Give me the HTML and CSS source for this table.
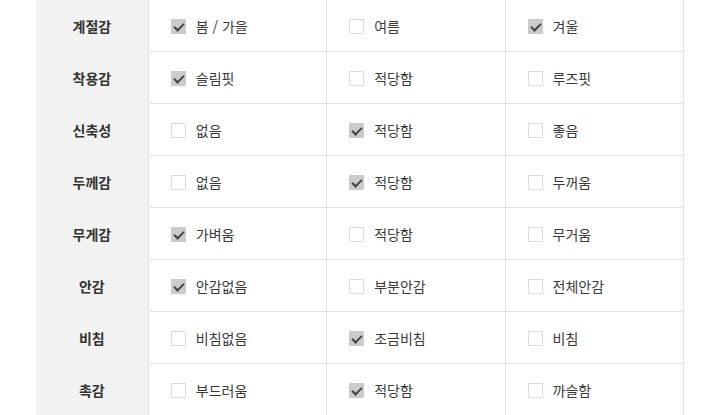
FILE: index.html
```html
<!DOCTYPE html>
<html lang="ko">
<head>
<meta charset="utf-8">
<link rel="stylesheet" href="styles.css">
</head>
<body>
<table class="spec">
  <colgroup><col class="c-label"><col class="c-opt"><col class="c-opt"><col class="c-opt"></colgroup>
  <tbody>
    <tr><th>계절감</th><td><span class="cb on"></span>봄 / 가을</td><td><span class="cb"></span>여름</td><td><span class="cb on"></span>겨울</td></tr>
    <tr><th>착용감</th><td><span class="cb on"></span>슬림핏</td><td><span class="cb"></span>적당함</td><td><span class="cb"></span>루즈핏</td></tr>
    <tr><th>신축성</th><td><span class="cb"></span>없음</td><td><span class="cb on"></span>적당함</td><td><span class="cb"></span>좋음</td></tr>
    <tr><th>두께감</th><td><span class="cb"></span>없음</td><td><span class="cb on"></span>적당함</td><td><span class="cb"></span>두꺼움</td></tr>
    <tr><th>무게감</th><td><span class="cb on"></span>가벼움</td><td><span class="cb"></span>적당함</td><td><span class="cb"></span>무거움</td></tr>
    <tr><th>안감</th><td><span class="cb on"></span>안감없음</td><td><span class="cb"></span>부분안감</td><td><span class="cb"></span>전체안감</td></tr>
    <tr><th>비침</th><td><span class="cb"></span>비침없음</td><td><span class="cb on"></span>조금비침</td><td><span class="cb"></span>비침</td></tr>
    <tr><th>촉감</th><td><span class="cb"></span>부드러움</td><td><span class="cb on"></span>적당함</td><td><span class="cb"></span>까슬함</td></tr>
  </tbody>
</table>
</body>
</html>
```
FILE: styles.css
```css
html, body {
  margin: 0;
  padding: 0;
  background: #fff;
}
body {
  font-family: "Noto Sans CJK KR", "Noto Sans", sans-serif;
  color: #333;
}
.spec {
  margin-top: -1px;
  margin-left: 36px;
  border-collapse: collapse;
  table-layout: fixed;
  width: 648px;
}
.c-label { width: 112px; }
.c-opt { width: 178px; }
.spec th {
  background: #f2f2f2;
  font-size: 14px;
  font-weight: 700;
  color: #333;
  height: 51px;
  padding: 0;
  text-align: center;
  border: none;
  border-top: 1px solid #f2f2f2;
  border-bottom: 1px solid #f2f2f2;
}
.spec td {
  height: 51px;
  padding: 0 0 0 22px;
  font-size: 14px;
  color: #3a3a3a;
  border: 1px solid #e0e0e0;
  white-space: nowrap;
  vertical-align: middle;
}
.cb {
  display: inline-block;
  box-sizing: border-box;
  width: 15px;
  height: 15px;
  border: 1px solid #dcdcdc;
  background: #fff;
  margin-right: 10px;
  vertical-align: -2px;
  position: relative;
}
.cb.on {
  background: #cbcbcb;
  border-color: #cbcbcb;
}
.cb.on::after {
  content: "";
  position: absolute;
  left: 2px;
  top: 3px;
  width: 8px;
  height: 4px;
  border-left: 2px solid #444;
  border-bottom: 2px solid #444;
  transform: rotate(-45deg);
}
```
